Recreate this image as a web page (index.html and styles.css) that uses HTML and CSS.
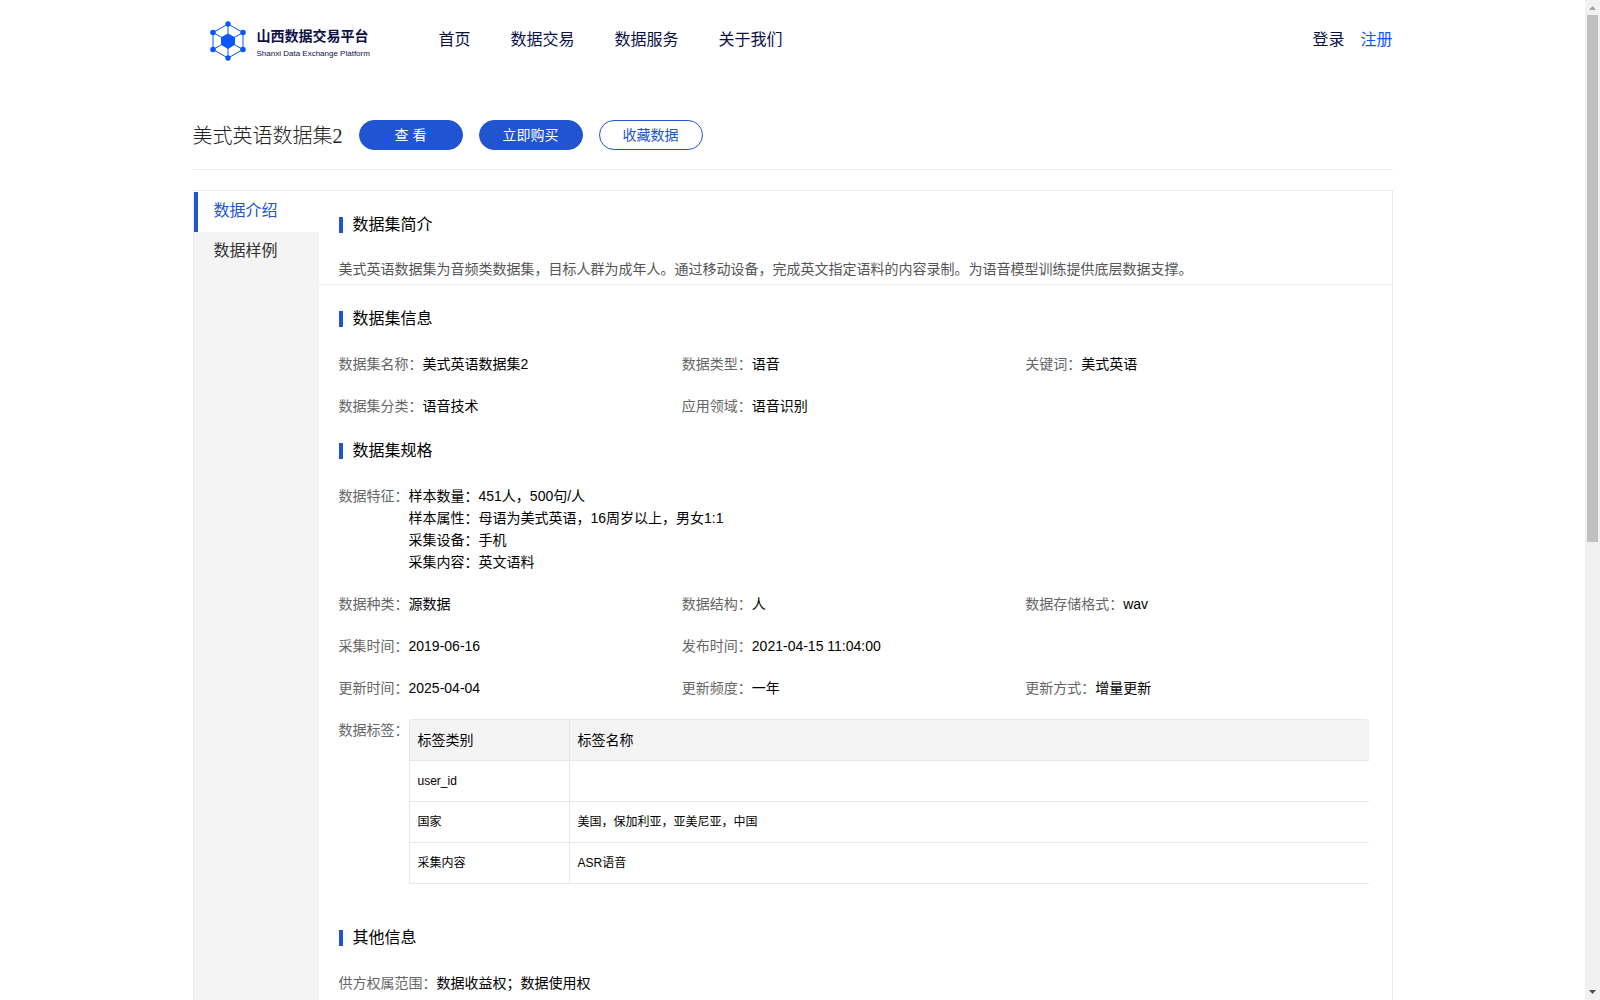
FILE: index.html
```html
<!DOCTYPE html>
<html lang="zh-CN">
<head>
    <meta charset="UTF-8">
    <meta name="viewport" content="width=device-width, initial-scale=1.0">
    <title>山西数据交易平台</title>
    <link rel="stylesheet" href="styles.css">
</head>
<body>
    <div class="page">
        <header class="container header">
            <a class="logo" href="#">
                <svg width="36" height="40" viewBox="0 0 36 40" fill="#0a57ff" stroke="#0a57ff">
                    <path d="M18 3 33 11.5V28.500L18 37 3 28.500V11.500ZM18 3V37M3 11.500 33 28.500M33 11.500 3 28.500" fill="none" stroke-width="1"/>
                    <path d="M18 13 24.500 16.500V23.500L18 27.500 11.500 23.500V16.500Z"/>
                    <g stroke="none">
                        <circle cx="18" cy="3" r="2.700"/>
                        <circle cx="33" cy="11.500" r="2.800"/>
                        <circle cx="33" cy="28.500" r="2.800"/>
                        <circle cx="18" cy="37" r="2.700"/>
                        <circle cx="3" cy="28.500" r="2.800"/>
                        <circle cx="3" cy="11.500" r="2.800"/>
                    </g>
                </svg>
                <span class="logo-text">
                    <strong>山西数据交易平台</strong>
                    <small>Shanxi Data Exchange Platform</small>
                </span>
            </a>
            <nav class="nav">
                <a href="#">首页</a>
                <a href="#">数据交易</a>
                <a href="#">数据服务</a>
                <a href="#">关于我们</a>
            </nav>
            <div class="user">
                <a href="#">登录</a>
                <a href="#" class="register">注册</a>
            </div>
        </header>

        <div class="container title-bar">
            <h1>美式英语数据集2</h1>
            <button type="button" class="btn">查&nbsp;看</button>
            <button type="button" class="btn">立即购买</button>
            <button type="button" class="btn btn-plain">收藏数据</button>
        </div>

        <main class="container detail">
            <div class="tabs">
                <a href="#" class="tab active">数据介绍</a>
                <a href="#" class="tab">数据样例</a>
            </div>
            <div class="content">
                <section class="intro">
                    <h2>数据集简介</h2>
                    <p>美式英语数据集为音频类数据集，目标人群为成年人。通过移动设备，完成英文指定语料的内容录制。为语音模型训练提供底层数据支撑。</p>
                </section>
                <section>
                    <h2>数据集信息</h2>
                    <dl class="info">
                        <div><dt>数据集名称：</dt><dd>美式英语数据集2</dd></div>
                        <div><dt>数据类型：</dt><dd>语音</dd></div>
                        <div><dt>关键词：</dt><dd>美式英语</dd></div>
                        <div><dt>数据集分类：</dt><dd>语音技术</dd></div>
                        <div><dt>应用领域：</dt><dd>语音识别</dd></div>
                    </dl>
                    <h2>数据集规格</h2>
                    <dl class="info">
                        <div class="full">
                            <dt>数据特征：</dt>
                            <dd>样本数量：451人，500句/人<br>样本属性：母语为美式英语，16周岁以上，男女1:1<br>采集设备：手机<br>采集内容：英文语料</dd>
                        </div>
                        <div><dt>数据种类：</dt><dd>源数据</dd></div>
                        <div><dt>数据结构：</dt><dd>人</dd></div>
                        <div><dt>数据存储格式：</dt><dd>wav</dd></div>
                        <div><dt>采集时间：</dt><dd>2019-06-16</dd></div>
                        <div class="wide"><dt>发布时间：</dt><dd>2021-04-15 11:04:00</dd></div>
                        <div><dt>更新时间：</dt><dd>2025-04-04</dd></div>
                        <div><dt>更新频度：</dt><dd>一年</dd></div>
                        <div><dt>更新方式：</dt><dd>增量更新</dd></div>
                        <div class="full">
                            <dt>数据标签：</dt>
                            <dd>
                                <table>
                                    <thead>
                                        <tr><th>标签类别</th><th>标签名称</th></tr>
                                    </thead>
                                    <tbody>
                                        <tr><td>user_id</td><td></td></tr>
                                        <tr><td>国家</td><td>美国，保加利亚，亚美尼亚，中国</td></tr>
                                        <tr><td>采集内容</td><td>ASR语音</td></tr>
                                    </tbody>
                                </table>
                            </dd>
                        </div>
                    </dl>
                    <h2>其他信息</h2>
                    <dl class="info">
                        <div class="full"><dt>供方权属范围：</dt><dd>数据收益权；数据使用权</dd></div>
                    </dl>
                </section>
            </div>
        </main>
    </div>
    <div class="scrollbar">
        <svg width="15" height="15" viewBox="0 0 15 15"><path d="M4 10 7.500 6 11 10Z" fill="#a3a3a3"/></svg>
        <div class="track"><div class="thumb"></div></div>
        <svg width="15" height="15" viewBox="0 0 15 15"><path d="M4 5 7.500 9 11 5Z" fill="#505050"/></svg>
    </div>
</body>
</html>
```
FILE: styles.css
```css
* { box-sizing: border-box; margin: 0; padding: 0; }
body { display: flex; height: 100vh; overflow: hidden; background: #fff; color: #000; font: 14px/22px "Liberation Sans", "Noto Sans CJK SC", sans-serif; }
a { color: inherit; text-decoration: none; }
.page { flex: 1; height: 100%; overflow: hidden; }
.container { width: 100%; max-width: 1200px; margin: 0 auto; }

.header { display: flex; align-items: center; height: 80px; padding-left: 17px; color: #0b1047; font-size: 16px; }
.logo { display: flex; align-items: center; gap: 11px; width: 229px; padding-top: 2px; }
.logo-text { display: flex; flex-direction: column; padding-top: 6px; }
.logo-text strong { font-size: 14px; line-height: 20px; }
.logo-text small { font-family: "Liberation Sans Narrow", "Liberation Sans", sans-serif; font-size: 8px; line-height: 16px; }
.nav { display: flex; gap: 40px; }
.user { display: flex; gap: 16px; margin-left: auto; }
.register { color: #0a57ff; }

.title-bar { display: flex; align-items: center; gap: 16px; height: 90px; padding-top: 20px; border-bottom: 1px solid #ebebeb; }
.title-bar h1 { padding-top: 2px; color: #222; font: 300 20px/30px "Liberation Serif", "Noto Sans CJK SC", serif; }
.btn { width: 104px; height: 30px; border: 1px solid #2054d1; border-radius: 15px; background: #2054d1; color: #fff; font: inherit; line-height: 20px; cursor: pointer; }
.btn-plain { background: #fff; color: #2054d1; }

.detail { display: flex; min-height: 1600px; margin-top: 20px; border: 1px solid #ebebeb; }
.tabs { width: 125px; border-top: 1px solid #fff; background: #f4f4f4; }
.tab { display: block; height: 40px; padding-left: 16px; border-left: 4px solid transparent; color: #333; font-size: 16px; line-height: 38px; }
.tab.active { border-left-color: #2054d1; background: #fff; color: #2054d1; }

.content { flex: 1; }
.content section { padding: 10px 23px 10px 20px; }
.content .intro { padding-bottom: 4px; border-bottom: 1px solid #ebebeb; }
.intro p { padding-top: 9px; color: #555; }
.content h2 { display: flex; align-items: center; gap: 10px; height: 24px; margin: 12px 0; font-size: 16px; font-weight: normal; }
.content h2::before { content: ""; width: 4px; height: 16px; background: #2054d1; }

.info { display: grid; grid-template-columns: repeat(3, 1fr); }
.info > div { display: flex; padding: 10px 0; }
.info .wide { grid-column: span 2; }
.info .full { grid-column: 1 / -1; }
.info dt { flex: none; color: #666; }
.info dd { flex: 1; }

table { width: 100%; margin-bottom: 20px; border: 1px solid #e8e8e8; border-width: 1px 0 0 1px; border-radius: 4px 4px 0 0; border-spacing: 0; table-layout: fixed; overflow: hidden; }
th, td { height: 41px; padding: 0 8px; border-bottom: 1px solid #e8e8e8; text-align: left; }
th { background: #f4f4f4; font-weight: normal; }
th:first-child, td:first-child { width: 160px; border-right: 1px solid #e8e8e8; }
td { font-size: 12px; }

.scrollbar { display: flex; flex-direction: column; width: 15px; background: #f1f1f1; }
.track { flex: 1; padding: 0 2px; }
.thumb { height: 54.3%; background: #c1c1c1; }
```
